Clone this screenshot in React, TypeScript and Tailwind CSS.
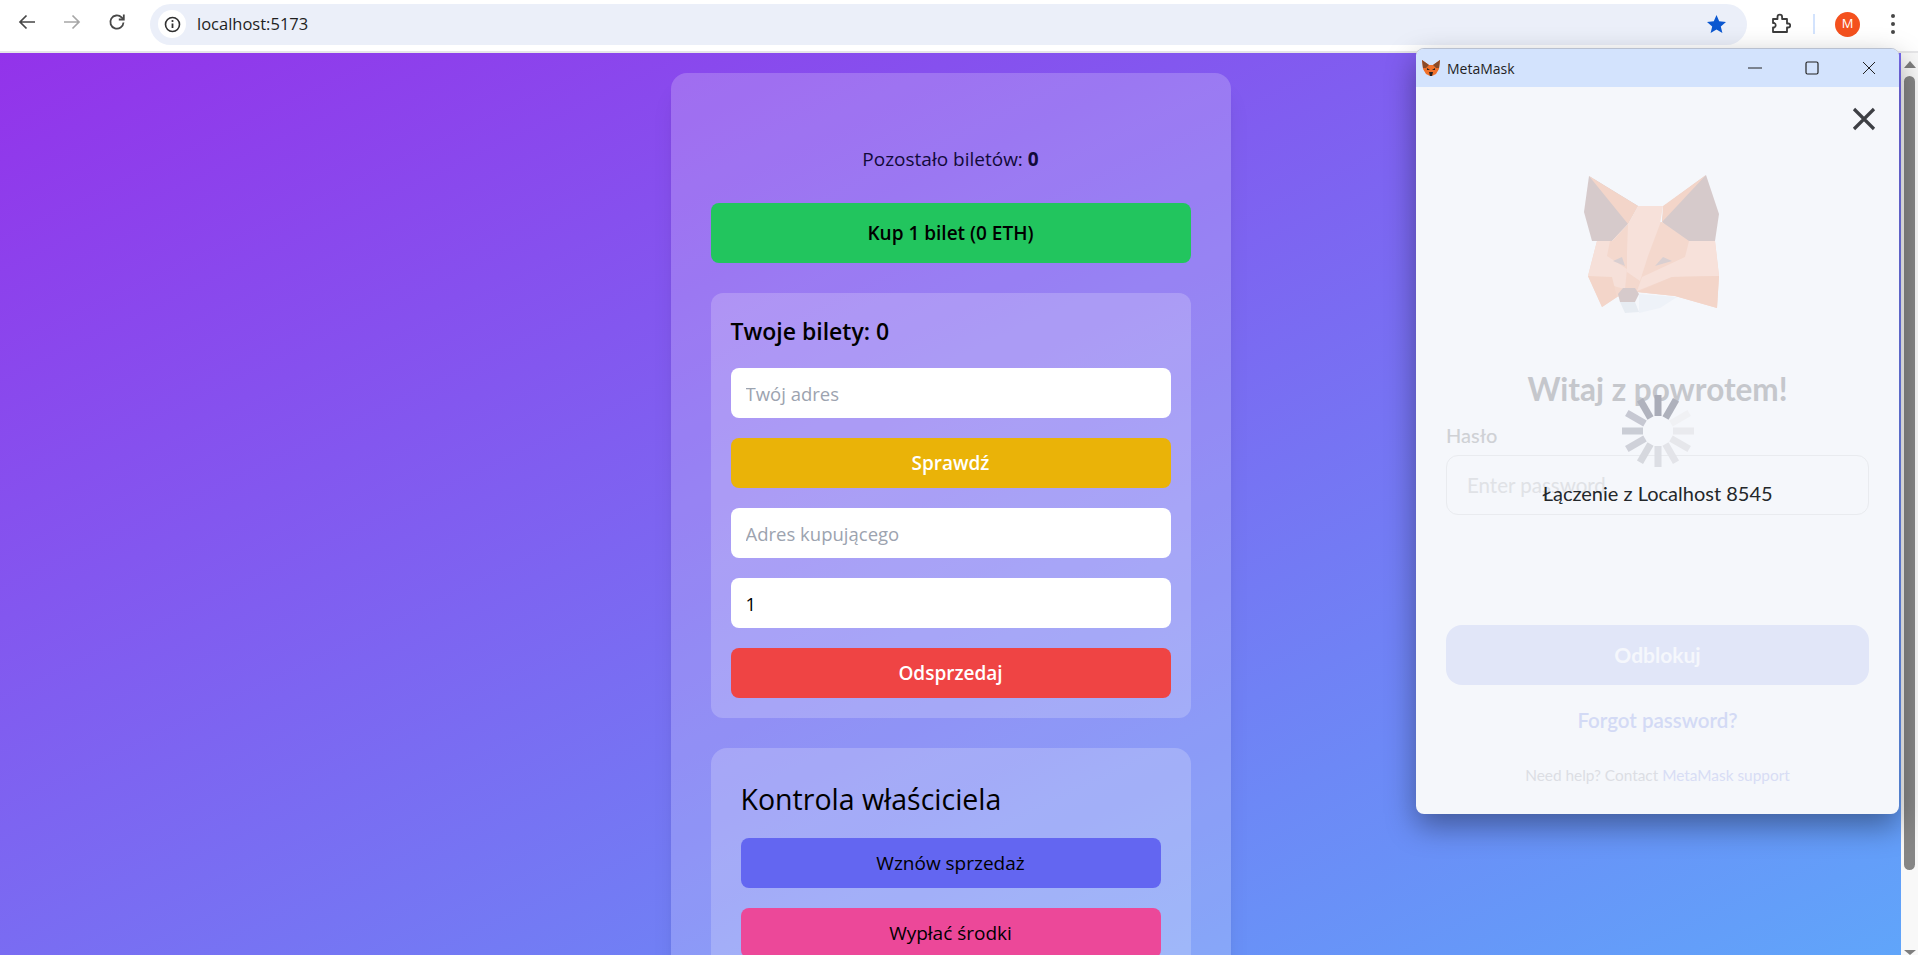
import React from "react";

const ui = { fontFamily: '"Open Sans","Noto Sans",sans-serif' };
const mm = { fontFamily: 'Lato,"Noto Sans",sans-serif' };

function Toolbar() {
  return (
    <div className="h-[53px] shrink-0 bg-white border-b-2 border-[#e6e6e8] flex items-center pb-[7px]" style={{ fontFamily: '"Open Sans",sans-serif' }}>
      <div className="w-[150px] shrink-0 flex items-center pl-[17px] gap-[25px]">
        <svg width="20" height="20" viewBox="0 0 20 20" fill="none" stroke="#474747" strokeWidth="1.7"><path d="M18 10H3M9.5 3.5 3 10l6.5 6.5" /></svg>
        <svg width="20" height="20" viewBox="0 0 20 20" fill="none" stroke="#a6a6a6" strokeWidth="1.7"><path d="M2 10h15M10.5 3.5 17 10l-6.5 6.5" /></svg>
        <svg width="20" height="20" viewBox="0 0 20 20" fill="none" stroke="#474747" strokeWidth="1.8"><path d="M16.5 10.5a6.6 6.6 0 1 1-1.9-5.1L16.5 7.300" /><path d="M16.800 2.500v5h-5" /></svg>
      </div>
      <div className="w-[1597px] shrink-0 h-[41px] mt-[4px] rounded-full bg-[#ebeff9] flex items-center pl-[8px] pr-[20px]">
        <div className="w-[28px] h-[28px] rounded-full bg-white flex items-center justify-center">
          <svg width="17" height="17" viewBox="0 0 17 17" fill="none"><circle cx="8.500" cy="8.500" r="7" stroke="#303030" strokeWidth="1.600" /><path d="M8.500 7.500v4.500" stroke="#303030" strokeWidth="1.800" /><circle cx="8.500" cy="5" r="1.100" fill="#303030" /></svg>
        </div>
        <span className="ml-[11px] text-[16.5px] text-[#1f1f1f]">localhost:5173</span>
        <svg className="ml-auto" width="21" height="20" viewBox="0 0 21 20"><path d="M10.500 1l2.700 6.300 6.800.6-5.200 4.500 1.600 6.700-5.900-3.600-5.900 3.600 1.600-6.700L1 7.900l6.800-.6z" fill="#0b57d0" /></svg>
      </div>
      <div className="flex-1 flex items-center pl-[24px] mt-[4px]">
        <svg width="20" height="22" viewBox="0 0 20 22" fill="none" stroke="#3c3c3c" strokeWidth="1.800"><path d="M2 6h4.500V4a2.300 2.300 0 0 1 4.600 0v2H16v4.500h1.200a2 2 0 0 1 0 4H16V19H2v-4.500h1.300a2.500 2.500 0 0 0 0-4.500H2z" strokeLinejoin="round" /></svg>
        <div className="w-[2px] h-[20px] bg-[#d3e3fd] ml-[22px]" />
        <div className="w-[25px] h-[25px] ml-[20px] rounded-full bg-[#f4511e] text-white text-[13px] flex items-center justify-center">M</div>
        <div className="ml-[31px] flex flex-col gap-[4px]">
          <div className="w-[4px] h-[4px] rounded-full bg-[#474747]" />
          <div className="w-[4px] h-[4px] rounded-full bg-[#474747]" />
          <div className="w-[4px] h-[4px] rounded-full bg-[#474747]" />
        </div>
      </div>
    </div>
  );
}

function Btn({ cls, children }: { cls: string; children: React.ReactNode }) {
  return <button className={`w-full h-[50px] rounded-lg text-[19px] flex items-center justify-center ${cls}`}>{children}</button>;
}

function Field({ ph, value }: { ph?: string; value?: string }) {
  return <input readOnly value={value} placeholder={ph} className="w-full h-[50px] rounded-lg bg-white px-[15px] text-[18.5px] text-black placeholder:text-[#9ca3af] outline-none" style={ui} />;
}

function Page() {
  return (
    <div className="flex-1 min-w-0 flex justify-center pt-[20px] bg-[linear-gradient(to_bottom_right,#9333ea,#60a5fa)]" style={ui}>
      <div className="w-[560px] h-fit rounded-2xl bg-white/20 shadow-xl px-10 pt-[73px] text-black">
        <p className="text-[19px] leading-[27px] text-center text-[#120a3a]">Pozostało biletów: <b className="font-bold">0</b></p>
        <div className="mt-[30px]"><Btn cls="bg-[#22c55e] h-[60px] font-semibold text-black">Kup 1 bilet (0 ETH)</Btn></div>
        <section className="mt-[30px] rounded-xl bg-white/20 p-5">
          <h2 className="text-[23px] leading-[36px] font-semibold mb-[19px] text-black">Twoje bilety: 0</h2>
          <div className="flex flex-col gap-5">
            <Field ph="Twój adres" />
            <Btn cls="bg-[#eab308] text-white font-semibold">Sprawdź</Btn>
            <Field ph="Adres kupującego" />
            <Field value="1" />
            <Btn cls="bg-[#ef4444] text-white font-semibold">Odsprzedaj</Btn>
          </div>
        </section>
        <section className="mt-[30px] rounded-2xl bg-white/20 px-[30px] pt-[30px] pb-[30px]">
          <h2 className="text-[28.5px] leading-[42px] font-normal mb-[18px] text-black">Kontrola właściciela</h2>
          <div className="flex flex-col gap-5">
            <Btn cls="bg-[#6366f1] text-black">Wznów sprzedaż</Btn>
            <Btn cls="bg-[#ec4899] text-black">Wypłać środki</Btn>
          </div>
        </section>
      </div>
    </div>
  );
}

function Scrollbar() {
  return (
    <div className="w-[17px] shrink-0 bg-[#f8f8f8] flex flex-col items-center">
      <div className="mt-[8px] w-0 h-0 border-x-[6px] border-x-transparent border-b-[7px] border-b-[#7e7e7e]" />
      <div className="mt-[8px] w-[11px] h-[794px] rounded-full bg-[#868686]" />
      <div className="mt-auto mb-0 w-0 h-0 border-x-[6px] border-x-transparent border-t-[5px] border-t-[#7e7e7e]" />
    </div>
  );
}

function FoxLarge() {
  return (
    <svg width="200" height="180" viewBox="0 0 200 180">
      <polygon points="77,92 195,92 199,127 197,159 155,147 117,143 97,148 82,158 68,127" fill="#f4d8cd" />
      <polygon points="69,27 118,57 108,75 92,92 72,92 64,63" fill="#d6cacb" />
      <polygon points="186,26 199,65 195,92 160,92 142,73 144,57" fill="#d6cacb" />
      <polygon points="69,27 118,57 108,75" fill="#f3d5c9" />
      <polygon points="186,26 143,57 142,73" fill="#f3d5c9" />
      <polygon points="108,75 142,73 169,92 167,110 128,125 107,120 88,110 92,92" fill="#f4d8cd" />
      <polygon points="118,57 143,57 140,75 128,107 120,132 107,123 107,103 108,75" fill="#f7e1da" />
      <polygon points="77,92 90,92 87,107 107,120 105,140 97,138 68,127" fill="#f6e0d9" />
      <polygon points="68,127 92,128 97,148 82,158" fill="#f3d5c9" />
      <polygon points="169,92 195,92 199,127 152,128 117,142 122,128 165,108" fill="#f7e1da" />
      <polygon points="152,128 199,127 197,159 155,147 117,143" fill="#f3d5c9" />
      <polygon points="93,112 102,108 105,117" fill="#d9cfd1" />
      <polygon points="135,117 143,108 152,112" fill="#d9cfd1" />
      <polygon points="98,145 103,139 115,139 119,145 115,153 100,153" fill="#d6cacb" />
      <polygon points="100,153 115,153 119,163 105,164" fill="#e7ecf2" />
      <polygon points="119,145 157,148 140,159 119,164" fill="#eef2f8" />
    </svg>
  );
}

function Spinner() {
  const bars = [
    [0, "#a9acb8"], [30, "#aeb1bc"], [60, "#f0f1f4"], [90, "#e9eaee"], [120, "#e6e7eb"], [150, "#e3e4e9"],
    [180, "#dcdee4"], [210, "#d6d8de"], [240, "#cfd1d9"], [270, "#cacdd5"], [300, "#c6c8d2"], [330, "#b0b3be"],
  ] as [number, string][];
  return (
    <svg width="76" height="76" viewBox="-38 -38 76 76">
      {bars.map(([a, c]) => (
        <rect key={a} x="-3.500" y="-36" width="7" height="21" fill={c} transform={`rotate(${a})`} />
      ))}
    </svg>
  );
}

function Popup() {
  return (
    <div className="absolute left-[1416px] top-[48px] w-[483px] h-[766px] rounded-lg bg-[#f5f7fb] overflow-hidden flex flex-col shadow-[0_12px_30px_rgba(0,0,0,0.38)] border-t border-[#b8c0d0]" style={mm}>
      <div className="h-[38px] shrink-0 bg-[#d3e3fd] flex items-center pl-[5px]">
        <svg width="20" height="18" viewBox="0 0 20 18"><polygon points="1,1 8,6 12,6 19,1 18,10 15,15 11,17 9,17 5,15 2,10" fill="#f0702a" /><polygon points="1,1 8,6 5,9 2,9" fill="#8a4a28" /><polygon points="19,1 12,6 15,9 18,9" fill="#8a4a28" /><polygon points="8,13 12,13 11,17 9,17" fill="#2b2320" /><polygon points="6,9 9,11 6,11" fill="#2b2320" /><polygon points="14,9 11,11 14,11" fill="#2b2320" /></svg>
        <span className="ml-[6px] text-[14px] text-[#1f1f1f]" style={ui}>MetaMask</span>
        <svg className="ml-auto" width="14" height="14" viewBox="0 0 14 14" stroke="#222" fill="none" strokeWidth="1"><path d="M0 7h14" /></svg>
        <svg className="ml-[43px]" width="14" height="14" viewBox="0 0 14 14" stroke="#222" fill="none" strokeWidth="1.200"><rect x="1" y="1" width="12" height="12" rx="1.500" /></svg>
        <svg className="ml-[43px] mr-[23px]" width="14" height="14" viewBox="0 0 14 14" stroke="#222" fill="none" strokeWidth="1"><path d="M1 1l12 12M13 1 1 13" /></svg>
      </div>
      <div className="relative flex-1 flex flex-col items-center px-[30px]">
        <svg className="self-end -mr-[7px] mt-[20px]" width="24" height="24" viewBox="0 0 24 24" stroke="#3d3f44" fill="none" strokeWidth="3.200"><path d="M2 2l20 20M22 2 2 22" /></svg>
        <div className="-ml-[75px] mt-[18px]"><FoxLarge /></div>
        <h1 className="mt-[42px] text-[31.5px] leading-[36px] font-bold text-[#c5c7cc]">Witaj z powrotem!</h1>
        <label className="self-start mt-[15px] text-[20px] leading-[26px] text-[#cfd1d5] font-medium">Hasło</label>
        <div className="w-full h-[60px] mt-[7px] rounded-xl border border-[#e9ebef] flex items-center px-[20px] text-[20.5px] text-[#e0e2e6]">Enter password</div>
        <button className="w-full h-[60px] mt-[110px] rounded-2xl bg-[#e1e6f8] text-[21px] font-bold text-[#f5f7fc]">Odblokuj</button>
        <a className="mt-[22px] text-[20.5px] leading-[26px] font-semibold text-[#d3daf5]">Forgot password?</a>
        <p className="mt-[32px] text-[15.4px] leading-[20px] text-[#dcdee4]">Need help? Contact <span className="text-[#d8ddf5]">MetaMask support</span></p>
        <div className="absolute left-0 right-0 top-[306px] flex flex-col items-center">
          <Spinner />
          <span className="mt-[11px] text-[20px] leading-[26px] text-[#24272a]">Łączenie z Localhost 8545</span>
        </div>
      </div>
    </div>
  );
}

export default function App() {
  return (
    <div className="relative h-screen overflow-hidden flex flex-col bg-white">
      <Toolbar />
      <div className="flex-1 min-h-0 flex overflow-hidden">
        <Page />
        <Scrollbar />
      </div>
      <Popup />
    </div>
  );
}
